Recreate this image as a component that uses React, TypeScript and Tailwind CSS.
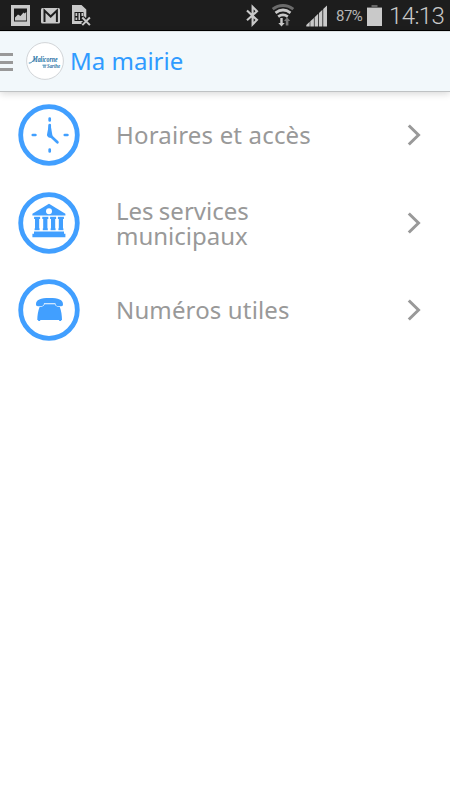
import type { ReactNode } from "react";

interface IMenuItem {
  label: string;
  rowClass: string;
  icon: ReactNode;
}

// round blue frame shared by every menu icon
const RoundIcon = ({ children }: { children: ReactNode }) => (
  <svg width={62} height={62} viewBox="0 0 62 62" className="ml-[18px] shrink-0 text-[#419fff]" fill="none">
    <circle cx="31" cy="31" r="28.3" stroke="currentColor" strokeWidth="4.8" />
    {children}
  </svg>
);

const ClockIcon = () => (
  <RoundIcon>
    <g stroke="currentColor" strokeWidth="2.7" strokeLinecap="round" strokeLinejoin="round">
      <path d="M31.7 14.5v2M31.7 45.5v2M14.8 31h2.6M46.8 31h2.6" />
      <path d="M31.7 21V31l7.7 7.3" />
    </g>
    <path d="M30.8 21h1.8l1.4 8 .5 3-1.4 1.4a2.9 2.9 0 0 1-3.9-3.8z" fill="currentColor" />
  </RoundIcon>
);

const columns = [16.6, 24.8, 32.6, 40.4];

const TownHallIcon = () => (
  <RoundIcon>
    <path d="M14.4 23.4v-1.6L31 11.8l16.4 10v1.6z" fill="currentColor" />
    <circle cx="31" cy="19.2" r="3" fill="#fff" />
    <g fill="currentColor">
      {columns.map((x, idx) => (
        <g key={idx}>
          <rect x={x - 0.5} y="24.8" width="6" height="2.2" />
          <rect x={x + 0.4} y="26" width="4.2" height="11" />
          <rect x={x} y="36.4" width="5" height="1.8" />
        </g>
      ))}
    </g>
    <path d="M16 39.4h30v2.4h1.4v3.4H14.4v-3.4H16z" fill="currentColor" />
  </RoundIcon>
);

const PhoneIcon = () => (
  <RoundIcon>
    <path
      d="M18 25.4C17.8 20.6 22.6 18.9 31.5 18.9S45.2 20.6 45 25.4c0 1.6-1.5 2.1-4.2 1.9-2.5-.2-3.2-.9-3.4-3.1H26c-.2 2.2-1 2.9-3.4 3.1-2.8.2-4.6-.3-4.6-1.9z"
      fill="currentColor"
    />
    <path
      d="M26.6 25.3h10.2c.8 1.8 2.2 2.7 5 2.7 1.5 4 2.2 8.4 2.2 13.1h-.8v.9h-2v-.9H22.2v.9h-2v-.9h-.9c0-4.7.8-9.1 2.3-13.1 2.8 0 4.2-.9 5-2.7z"
      fill="currentColor"
    />
  </RoundIcon>
);

const menuItems: IMenuItem[] = [
  { label: "Horaires et accès", rowClass: "tracking-[0.17px]", icon: <ClockIcon /> },
  { label: "Les services municipaux", rowClass: "pt-[2px] tracking-normal [word-spacing:-1px]", icon: <TownHallIcon /> },
  { label: "Numéros utiles", rowClass: "tracking-[0.14px]", icon: <PhoneIcon /> },
];

const StatusBar = () => (
  <div className="flex h-[31px] shrink-0 items-center border-b border-black bg-[#1d1d1d] text-[#c9c9c9]">
    <svg width={100} height={30} viewBox="0 0 100 30" className="shrink-0">
      {/* gallery */}
      <path d="M11 5h19v21H11z" fill="#c9c9c9" />
      <path d="M14 8.5h13v13H14z" fill="#1d1d1d" />
      <path d="M15 20.5v-3l3-3 2.5 1.5 3-3.5 1 1 1.8-1.5v8.5z" fill="#c9c9c9" />
      {/* mail */}
      <rect x="41" y="8" width="19" height="15.5" rx="1.5" fill="#c9c9c9" />
      <path d="M44.5 22V10.5l6.2 6 6.2-6V22" fill="none" stroke="#1d1d1d" strokeWidth="2" />
      {/* missing sim */}
      <path d="M72 5h9.5l4.8 4.6v8L84 20l-2 4H72z" fill="#c9c9c9" />
      <path d="M74.5 12h9v9h-9z" fill="#1d1d1d" />
      <path d="M75.5 13h1.7v3h-1.7zM78.5 13H80v7h-1.5zM81.5 13H83v3h-1.5zM75.5 17.5h1.7V20h-1.7z" fill="#c9c9c9" />
      <path d="m82.5 17.5 7 7M89.5 17.5l-7 7" stroke="#1d1d1d" strokeWidth="4" />
      <path d="m82.3 17.5 7.6 7.6M89.9 17.5l-7.6 7.6" stroke="#c9c9c9" strokeWidth="2" />
    </svg>
    <svg width={94} height={30} viewBox="0 0 94 30" className="ml-auto shrink-0" fill="none">
      {/* bluetooth */}
      <path d="m5 10.5 10 9.4-4.4 4.6V6.8l4.4 4.5-10 9" stroke="#c9c9c9" strokeWidth="2.1" />
      {/* wifi */}
      <path d="M30.7 9.2c6.2-4.9 14.4-4.9 20.6 0" stroke="#6b6b6b" strokeWidth="2.8" />
      <path d="M33.5 12.8c4.9-3.6 10.1-3.6 15 0M36.2 16.6c3.2-2.3 6.4-2.3 9.6 0" stroke="#c9c9c9" strokeWidth="2.8" />
      <path d="M38.3 18h2.4v5h2L39.5 26.6 36.3 23h2z" fill="#c9c9c9" />
      <path d="M43.8 25.5V21H42l3.1-3.8 3.1 3.8h-1.8v4.5z" fill="#777" />
      {/* signal */}
      <path
        d="M64.3 26.5V25l3.4-3.2v4.7zM68.3 26.5v-5.2l3.6-3.4v8.6zM72.6 26.5v-9.2l3.6-3.5v12.7zM77 26.5V13l3.4-3.3v16.8zM81.2 26.5V9l3.8-3.6v21.1z"
        fill="#c9c9c9"
      />
    </svg>
    <span className="mt-[2px] w-[28px] font-[Roboto,sans-serif] text-[15px] leading-[30px] tracking-[-0.5px] text-[#b5b5b5]">
      87%
    </span>
    <svg width={15} height={21} viewBox="0 0 15 21" className="ml-[3px] mt-px shrink-0">
      <path d="M4.5 0h6v2H15v2H0V2h4.5z" fill="#666" />
      <path d="M0 3h15v18H0z" fill="#c9c9c9" />
    </svg>
    <span className="ml-[7px] mt-px w-[61px] whitespace-nowrap font-[Roboto,sans-serif] text-[24px] font-light leading-[30px] tracking-[-0.6px]">
      14:13
    </span>
  </div>
);

const TownLogo = () => (
  <svg width={38} height={38} viewBox="0 0 38 38" className="ml-[13px] shrink-0 overflow-visible">
    <circle cx="19" cy="19" r="18.4" fill="#fff" stroke="#d2d5d8" />
    <g fill="#1c70a3" fontFamily="'Liberation Serif', serif" fontStyle="italic" fontWeight="bold">
      <text x="6.5" y="20.3" fontSize="8" textLength="25" lengthAdjust="spacingAndGlyphs">
        Malicorne
      </text>
      <text x="21" y="26" fontSize="5.5" textLength="13" lengthAdjust="spacingAndGlyphs">
        Sarthe
      </text>
    </g>
    <path d="M2.8 21c2.4.4 4.4-2.2 6.6-5M16.5 23.2h4M17 25h3" stroke="#1c70a3" strokeWidth=".9" fill="none" />
  </svg>
);

const Header = () => (
  <header className="flex h-[61px] shrink-0 items-center border-t border-b border-t-[#dde2e4] border-b-[#bfc2c4] bg-[#f2f8fb] pb-px font-['Noto_Sans',sans-serif] shadow-[0_2px_7px_rgba(0,0,0,0.15)]">
    <div className="mt-[2px] flex w-[13px] shrink-0 flex-col gap-[4.5px]">
      <span className="h-[3px] bg-[#999]" />
      <span className="h-[3px] bg-[#999]" />
      <span className="h-[3px] bg-[#999]" />
    </div>
    <TownLogo />
    <h1 className="ml-[6px] text-[24px] leading-[30px] text-[#2f9bff]">Ma mairie</h1>
  </header>
);

const App = () => {
  return (
    <div className="flex h-screen w-full flex-col overflow-hidden bg-white">
      <StatusBar />
      <Header />
      <main className="-mt-[0.9px] font-['Noto_Sans',sans-serif]">
        {menuItems.map((item, idx) => (
          <button key={idx} className={`flex h-[87.5px] w-full items-center text-left ${item.rowClass}`}>
            {item.icon}
            <span className="ml-[36px] w-[220px] text-[24px] leading-[25px] text-[#999]">{item.label}</span>
            <svg width={16} height={24} viewBox="0 0 16 24" className="ml-[70px] shrink-0" fill="none">
              <path d="m2.8 2.5 9.7 9.5-9.7 9.5" stroke="#999" strokeWidth="3" />
            </svg>
          </button>
        ))}
      </main>
    </div>
  );
};

export default App;
